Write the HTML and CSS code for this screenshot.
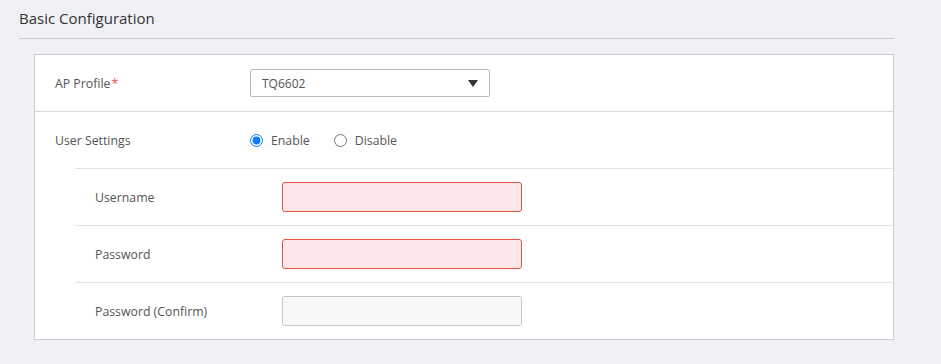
FILE: index.html
```html
<!DOCTYPE html>
<html lang="en">
<head>
  <meta charset="UTF-8" />
  <title>Basic Configuration</title>
  <link rel="stylesheet" href="styles.css">
</head>
<body>
  <div class="section">
    <h2 class="section-title">Basic Configuration</h2>

    <div class="panel">
      <!-- AP profile -->
      <div class="row">
        <label class="row-label">AP Profile<span class="required">*</span></label>
        <div class="select-box">
          <span class="select-value">TQ6602</span>
          <svg class="select-arrow" width="10" height="7" viewBox="0 0 10 7"><path d="M0 0H10L5 7Z" fill="#333"/></svg>
        </div>
      </div>

      <!-- User settings -->
      <div class="row no-border">
        <label class="row-label">User Settings</label>
        <div class="radio-group">
          <label class="radio"><input type="radio" name="user" checked> Enable</label>
          <label class="radio"><input type="radio" name="user"> Disable</label>
        </div>
      </div>

      <div class="sub-rows">
        <div class="row sub-row">
          <label class="row-label">Username</label>
          <input class="text-input error" type="text">
        </div>
        <div class="row sub-row">
          <label class="row-label">Password</label>
          <input class="text-input error" type="password">
        </div>
        <div class="row sub-row">
          <label class="row-label">Password (Confirm)</label>
          <input class="text-input" type="password">
        </div>
      </div>
    </div>
  </div>
</body>
</html>
```

FILE: styles.css
```css
/* Page */
html, body {
  margin: 0;
  padding: 0;
  background-color: #f0f1f5;
  font-family: "Open Sans", "Noto Sans", Arial, sans-serif;
  color: #555;
}

.section {
  width: 875px;
  padding: 0 0 0 19px;
}

.section-title {
  margin: 0;
  padding-top: 8px;
  box-sizing: border-box;
  height: 39px;
  font-size: 15px;
  line-height: 20px;
  font-weight: normal;
  color: #333;
  border-bottom: 1px solid #c8cacd;
}

/* Panel with form rows */
.panel {
  margin: 15px 0 0 15px;
  background: #fff;
  border: 1px solid #cbcdd0;
}

.row {
  display: flex;
  align-items: center;
  height: 56px;
  padding-left: 20px;
  border-bottom: 1px solid #d8dadd;
}

.row.no-border {
  border-bottom: none;
}

.row-label {
  width: 195px;
  flex-shrink: 0;
  font-size: 12.3px;
  color: #555;
}

.required {
  color: #e74c3c;
  margin-left: 1px;
}

/* Select */
.select-box {
  display: flex;
  align-items: center;
  justify-content: space-between;
  padding: 0 11px 0 11px;
  box-sizing: border-box;
  width: 240px;
  height: 28px;
  border: 1px solid #b8babd;
  border-radius: 2px;
  font-size: 12px;
  color: #555;
}

/* Radios */
.radio-group {
  display: flex;
  gap: 24px;
}

.radio {
  display: flex;
  align-items: center;
  gap: 8px;
  font-size: 12.3px;
  color: #555;
}

.radio input {
  margin: 0;
  width: 13px;
  height: 13px;
  accent-color: #0a7cff;
}

/* Nested rows */
.sub-rows {
  margin-left: 40px;
}

.sub-row {
  border-bottom: none;
  border-top: 1px solid #e2e5e8;
}

.sub-row .row-label {
  width: 187px;
}

.text-input {
  width: 240px;
  height: 30px;
  box-sizing: border-box;
  border: 1px solid #c4c6c9;
  border-radius: 3px;
  background: #f8f8f8;
  padding: 0 8px;
  font-family: inherit;
}

.text-input.error {
  border-color: #e4533f;
  background: #fde8e9;
}
```
